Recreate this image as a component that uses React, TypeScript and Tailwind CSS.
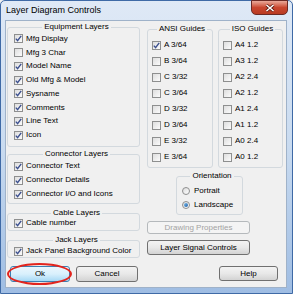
import React from "react";

const font = { fontFamily: '"Liberation Sans", Arial, sans-serif' };

function Check({ checked }: { checked: boolean }) {
  return (
    <span className="w-[9px] h-[9px] border border-[#8e8f8f] bg-gradient-to-br from-[#dedede] to-[#fbfbfb] flex items-center justify-center shrink-0">
      {checked && (
        <svg width="7" height="7" viewBox="0 0 7 7">
          <path d="M0.8 3.6 L2.6 5.6 L6.2 0.9" fill="none" stroke="#3b4f8e" strokeWidth="1.4" />
        </svg>
      )}
    </span>
  );
}

function Row({ label, checked, h }: { label: string; checked: boolean; h: string }) {
  return (
    <div className={`flex items-center ${h}`}>
      <Check checked={checked} />
      <span className="ml-[3px] text-[8px] leading-none text-black whitespace-nowrap">{label}</span>
    </div>
  );
}

function Radio({ label, on }: { label: string; on: boolean }) {
  return (
    <div className="flex items-center h-[14px]">
      <span className="w-[8px] h-[8px] rounded-full border border-[#8e8f8f] bg-gradient-to-br from-[#dcdcdc] to-white flex items-center justify-center shrink-0">
        {on && <span className="w-[4px] h-[4px] rounded-full bg-gradient-to-br from-[#7fc1f0] to-[#1a5aa0]" />}
      </span>
      <span className="ml-[4px] text-[8px] leading-none text-black">{label}</span>
    </div>
  );
}

function Group({ title, className, children }: { title: string; className: string; children: React.ReactNode }) {
  return (
    <fieldset className={`border border-[#d3d9de] rounded-[3px] ${className}`}>
      <legend className="mx-auto px-[2px] text-[8px] leading-[10px] h-[10px] text-black">{title}</legend>
      {children}
    </fieldset>
  );
}

function Btn({ label, className, disabled }: { label: string; className: string; disabled?: boolean }) {
  return (
    <div
      className={`flex items-center justify-center rounded-[3px] border text-[8px] leading-none ${
        disabled
          ? "border-[#b5b9bc] bg-[#f4f4f4] text-[#a3a3a3]"
          : "border-[#707070] bg-gradient-to-b from-[#f3f3f3] via-[#e8e8e8] to-[#d3d3d3] text-black"
      } ${className}`}
    >
      {label}
    </div>
  );
}

export default function App() {
  const equip: [string, boolean][] = [
    ["Mfg Display", true],
    ["Mfg 3 Char", false],
    ["Model Name", true],
    ["Old Mfg & Model", true],
    ["Sysname", true],
    ["Comments", true],
    ["Line Text", true],
    ["Icon", true],
  ];
  const ansi: [string, boolean][] = [
    ["A 3/64", true],
    ["B 3/64", false],
    ["C 3/32", false],
    ["C 3/64", false],
    ["D 3/32", false],
    ["D 3/64", false],
    ["E 3/32", false],
    ["E 3/64", false],
  ];
  const iso = ["A4 1.2", "A3 1.2", "A2 2.4", "A2 1.2", "A1 2.4", "A1 1.2", "A0 2.4", "A0 1.2"];

  return (
    <div style={font} className="w-[293px] h-[294px] bg-[#f0f0f0]">
      <div className="w-[293px] h-[294px] flex flex-col border border-[#3f6aa6] rounded-t-[5px] bg-gradient-to-b from-[#dfe9f6] via-[#c9dbf0] to-[#9fbde3]">
        {/* title bar */}
        <div className="relative h-[19px] flex items-center pl-[5px]">
          <span className="text-[9px] text-black leading-none">Layer Diagram Controls</span>
          <div className="absolute right-[4px] top-[-1px] w-[37px] h-[15px] rounded-b-[5px] border border-[#6b2a25] bg-gradient-to-b from-[#e9a99a] via-[#c9462f] to-[#b93b22] flex items-center justify-center">
            <svg width="10" height="8" viewBox="0 0 10 8">
              <path d="M1.5 1 L8.5 7 M8.5 1 L1.5 7" stroke="#5a1a12" strokeWidth="3" />
              <path d="M1.5 1 L8.5 7 M8.5 1 L1.5 7" stroke="#ffffff" strokeWidth="1.6" />
            </svg>
          </div>
        </div>
        {/* client */}
        <div className="ml-[4px] w-[282px] h-[268px] bg-[#f0f0f0] border border-[#9fb2c9] flex pl-[1px] pt-[1px]">
          {/* left column */}
          <div className="w-[133px] flex flex-col">
            <Group title="Equipment Layers" className="h-[125px] pl-[6px]">
              {equip.map(([l, c]) => (
                <Row key={l} label={l} checked={c} h="h-[13.75px]" />
              ))}
            </Group>
            <Group title="Connector Layers" className="h-[55px] mt-[2px] pl-[6px]">
              <Row label="Connector Text" checked h="h-[14px]" />
              <Row label="Connector Details" checked h="h-[14px]" />
              <Row label="Connector I/O and Icons" checked h="h-[14px]" />
            </Group>
            <Group title="Cable Layers" className="h-[23px] mt-[4px] pl-[6px]">
              <div className="-mt-[1px]">
                <Row label="Cable number" checked h="h-[12px]" />
              </div>
            </Group>
            <Group title="Jack Layers" className="h-[23px] mt-[4px] pl-[6px]">
              <Row label="Jack Panel Background Color" checked h="h-[12px]" />
            </Group>
            <div className="flex mt-[8px] pl-[3px]">
              <div className="relative">
                <div className="w-[60px] h-[16px] rounded-[3px] border border-[#3c7fb1] bg-gradient-to-b from-[#eaf6fd] via-[#d9f0fc] to-[#a7d9f5] flex items-center justify-center text-[8px] leading-none text-black">
                  Ok
                </div>
                <div className="absolute -left-[3px] -right-[2px] -top-[3px] -bottom-[3px] rounded-[50%] border-[2.5px] border-[#e3241d]" />
              </div>
              <Btn label="Cancel" className="w-[62px] h-[16px] ml-[6px]" />
            </div>
          </div>
          {/* right part */}
          <div className="ml-[7px] w-[136px] flex flex-col">
            <div className="flex mt-[2px]">
              <Group title="ANSI Guides" className="w-[66px] h-[144px] pl-[4px] pt-[3px]">
                {ansi.map(([l, c]) => (
                  <Row key={l} label={l} checked={c} h="h-[16px]" />
                ))}
              </Group>
              <Group title="ISO Guides" className="w-[65px] h-[144px] ml-[5px] pl-[4px] pt-[3px]">
                {iso.map((l) => (
                  <Row key={l} label={l} checked={false} h="h-[16px]" />
                ))}
              </Group>
            </div>
            <Group title="Orientation" className="w-[67px] h-[44px] ml-[29px] mt-[3px] pl-[5px] pt-[3px]">
              <Radio label="Portrait" on={false} />
              <Radio label="Landscape" on />
            </Group>
            <Btn label="Drawing Properties" className="w-[103px] h-[13px] mt-[6px]" disabled />
            <Btn label="Layer Signal Controls" className="w-[103px] h-[15px] mt-[6px]" />
            <Btn label="Help" className="w-[59px] h-[15px] mt-[11px] ml-[72px]" />
          </div>
        </div>
      </div>
    </div>
  );
}
